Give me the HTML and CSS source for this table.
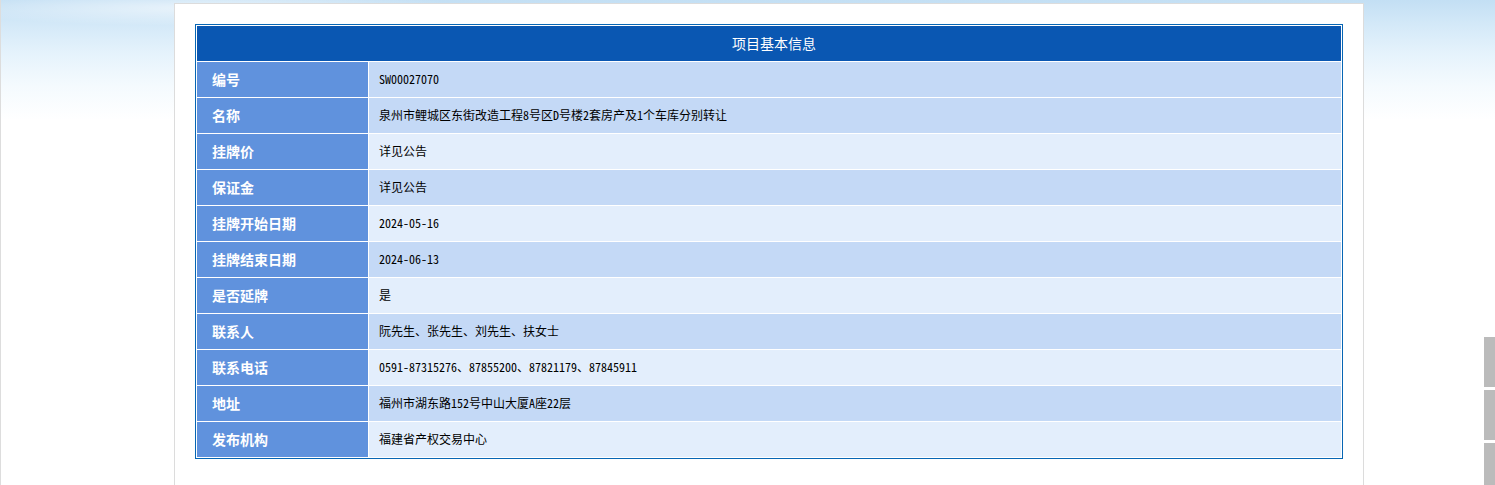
FILE: index.html
```html
<!DOCTYPE html>
<html lang="zh-CN">
<head>
<meta charset="utf-8">
<title>项目基本信息</title>
<link rel="stylesheet" href="styles.css">
</head>
<body>
<div class="page">
  <div class="panel">
    <table class="info">
      <colgroup>
        <col class="col-label">
        <col class="col-value">
      </colgroup>
      <thead>
        <tr><th colspan="2" class="title">项目基本信息</th></tr>
      </thead>
      <tbody>
        <tr class="dark"><td class="label">编号</td><td class="value">SW00027070</td></tr>
        <tr class="dark"><td class="label">名称</td><td class="value">泉州市鲤城区东街改造工程8号区D号楼2套房产及1个车库分别转让</td></tr>
        <tr class="light"><td class="label">挂牌价</td><td class="value">详见公告</td></tr>
        <tr class="dark"><td class="label">保证金</td><td class="value">详见公告</td></tr>
        <tr class="light"><td class="label">挂牌开始日期</td><td class="value">2024-05-16</td></tr>
        <tr class="dark"><td class="label">挂牌结束日期</td><td class="value">2024-06-13</td></tr>
        <tr class="light"><td class="label">是否延牌</td><td class="value">是</td></tr>
        <tr class="dark"><td class="label">联系人</td><td class="value">阮先生、张先生、刘先生、扶女士</td></tr>
        <tr class="light"><td class="label">联系电话</td><td class="value">0591-87315276、87855200、87821179、87845911</td></tr>
        <tr class="dark"><td class="label">地址</td><td class="value">福州市湖东路152号中山大厦A座22层</td></tr>
        <tr class="light"><td class="label">发布机构</td><td class="value">福建省产权交易中心</td></tr>
      </tbody>
    </table>
  </div>
</div>
<div class="side-tools">
  <span class="tool"></span>
  <span class="tool"></span>
  <span class="tool"></span>
</div>
</body>
</html>
```

FILE: styles.css
```css
html, body {
  margin: 0;
  padding: 0;
}

body {
  height: 485px;
  overflow: hidden;
  font-family: "Noto Sans CJK SC", sans-serif;
  background-color: #ffffff;
  background-image:
    radial-gradient(ellipse 260px 18px at 200px 8px, rgba(255,255,255,0.6), rgba(255,255,255,0)),
    linear-gradient(to bottom, #c3dff4 0px, #d4e9f8 25px, #e6f3fc 55px, #f4fafe 85px, #ffffff 120px);
  background-repeat: no-repeat;
  border-left: 1px solid #dddddd;
  box-sizing: border-box;
}

.page {
  display: flex;
  padding-left: 173px;
  padding-top: 3px;
}

.panel {
  width: 1148px;
  height: 462px;
  padding: 20px 20px 0 20px;
  background: #ffffff;
  border: 1px solid #dcdcdc;
  border-bottom: none;
}

.info {
  width: 1148px;
  border-collapse: separate;
  border-spacing: 1px;
  border: 1px solid #0766b4;
  background: #ffffff;
  table-layout: fixed;
}

.col-label {
  width: 171px;
}

.info th,
.info td {
  box-sizing: border-box;
  height: 35px;
  padding: 0 0 2px 0;
  line-height: 1;
  vertical-align: middle;
}

.title {
  background: #0a57b2;
  color: #ffffff;
  font-size: 14px;
  font-weight: normal;
  text-align: center;
  padding-left: 10px !important;
}

.label {
  background: #6092dd;
  color: #ffffff;
  font-size: 14px;
  font-weight: bold;
  padding-left: 15px !important;
  white-space: nowrap;
}

.value {
  font-family: "Noto Sans Mono CJK SC", "Noto Sans CJK SC", monospace;
  font-size: 12px;
  color: #000000;
  padding-left: 10px !important;
}

.dark .value {
  background: #c4d9f6;
}

.light .value {
  background: #e3eefc;
}

.side-tools {
  position: fixed;
  right: 0;
  top: 337px;
  display: flex;
  flex-direction: column;
  gap: 3px;
}

.tool {
  display: block;
  width: 11px;
  height: 50px;
  background: #bbbbbb;
}
```
